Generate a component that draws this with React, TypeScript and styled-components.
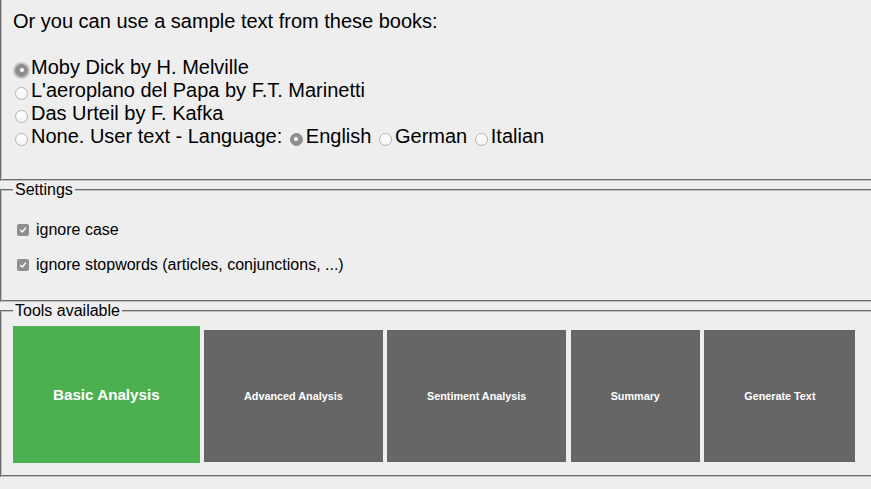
import React from "react";
import styled, { createGlobalStyle } from "styled-components";

const GlobalStyle = createGlobalStyle`
    html, body {
        margin: 0;
        padding: 0;
        background: #eeeeee;
    }
    body {
        font-family: "Liberation Sans", Arial, Helvetica, sans-serif;
        color: #000;
        overflow: hidden;
    }
`;

const Page = styled.div`
    overflow: hidden;
    width: 100%;
`;

const Group = styled.fieldset<{ $open?: boolean }>`
    margin: 0 -12px 0 0;
    padding: 5.6px 12px 10px 11px;
    border: 2px groove #c0c0c0;
    ${(p) => p.$open && "border-top: none;"}
    font-size: 16px;
`;

const Legend = styled.legend`
    padding: 0 2px;
    font-size: 16px;
    line-height: 18px;
`;

const Books = styled.div`
    padding: 4px 0 21px;
    font-size: 20px;
    line-height: 23px;
`;

const Heading = styled.p`
    margin: 0 0 23px;
`;

const Option = styled.div`
    white-space: nowrap;
`;

const Radio = styled.span<{ $checked?: boolean; $focus?: boolean }>`
    display: inline-block;
    box-sizing: border-box;
    width: 13px;
    height: 13px;
    margin: 0 3px 0 2px;
    vertical-align: -3px;
    border-radius: 50%;
    position: relative;
    border: 1px solid ${(p) => (p.$checked ? "#8a8a8a" : "#b4b4b4")};
    background: ${(p) =>
        p.$checked ? "#8f8f8f" : "linear-gradient(#ffffff, #f3f3f3)"};
    box-shadow: ${(p) => (p.$focus ? "0 0 0 2px rgba(150,150,150,0.45)" : "none")};

    &::after {
        content: "";
        display: ${(p) => (p.$checked ? "block" : "none")};
        position: absolute;
        left: 50%;
        top: 50%;
        width: 4px;
        height: 4px;
        margin: -2px 0 0 -2px;
        border-radius: 50%;
        background: #fff;
    }
`;

const Checks = styled.div`
    display: flex;
    flex-direction: column;
    gap: 16px;
    padding: 16px 0 16px;
`;

const CheckRow = styled.label`
    display: flex;
    align-items: center;
    height: 19px;
    font-size: 16px;
`;

const Box = styled.span`
    display: inline-flex;
    align-items: center;
    justify-content: center;
    box-sizing: border-box;
    width: 12px;
    height: 12px;
    margin: 0 7px 0 4px;
    border-radius: 2px;
    background: #8f8f8f;
`;

const Tools = styled.div`
    display: flex;
    align-items: baseline;
    gap: 4.4px;
    padding: 0 0 2px;
`;

const Tool = styled.div<{ $active?: boolean }>`
    padding: 60px 40px;
    color: #fff;
    font-weight: bold;
    white-space: nowrap;
    background: ${(p) => (p.$active ? "#4caf50" : "#666666")};
    font-size: ${(p) => (p.$active ? "15.2px" : "10.8px")};
    line-height: ${(p) => (p.$active ? "17px" : "12px")};
`;

const Tick = () => (
    <svg width="8" height="8" viewBox="0 0 8 8">
        <path d="M1.5 4.2 L3.3 6 L6.5 2" fill="none" stroke="#fff" strokeWidth="1.3" strokeLinecap="round" strokeLinejoin="round" />
    </svg>
);

const tools = ["Advanced Analysis", "Sentiment Analysis", "Summary", "Generate Text"];

const App = () => (
    <Page>
        <GlobalStyle />
        <Group $open>
            <Books>
                <Heading>Or you can use a sample text from these books:</Heading>
                <Option><Radio $checked $focus />Moby Dick by H. Melville</Option>
                <Option><Radio />L'aeroplano del Papa by F.T. Marinetti</Option>
                <Option><Radio />Das Urteil by F. Kafka</Option>
                <Option>
                    <Radio />None. User text - Language: <Radio $checked />English <Radio />German <Radio />Italian
                </Option>
            </Books>
        </Group>
        <Group>
            <Legend>Settings</Legend>
            <Checks>
                <CheckRow><Box><Tick /></Box>ignore case</CheckRow>
                <CheckRow><Box><Tick /></Box>ignore stopwords (articles, conjunctions, ...)</CheckRow>
            </Checks>
        </Group>
        <Group>
            <Legend>Tools available</Legend>
            <Tools>
                <Tool $active>Basic Analysis</Tool>
                {tools.map((t) => (
                    <Tool key={t}>{t}</Tool>
                ))}
            </Tools>
        </Group>
    </Page>
);

export default App;
